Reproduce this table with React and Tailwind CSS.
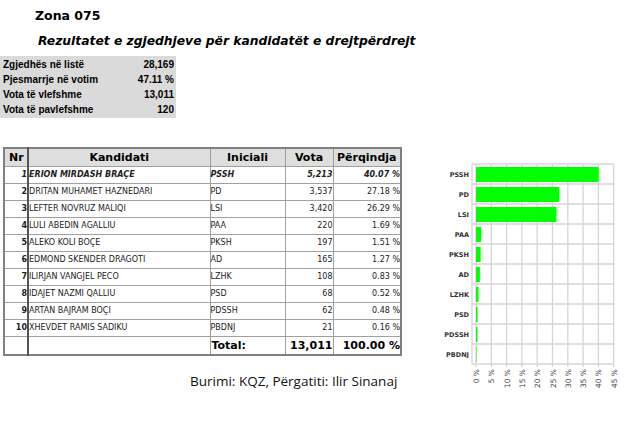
import React from "react";

const summary = [
  ["Zgjedhës në listë", "28,169"],
  ["Pjesmarrje në votim", "47.11 %"],
  ["Vota të vlefshme", "13,011"],
  ["Vota të pavlefshme", "120"],
];

const candidates = [
  ["ERION MIRDASH BRAÇE", "PSSH", "5,213", "40.07 %", 40.07],
  ["DRITAN MUHAMET HAZNEDARI", "PD", "3,537", "27.18 %", 27.18],
  ["LEFTER NOVRUZ MALIQI", "LSI", "3,420", "26.29 %", 26.29],
  ["LULI ABEDIN AGALLIU", "PAA", "220", "1.69 %", 1.69],
  ["ALEKO KOLI BOÇE", "PKSH", "197", "1.51 %", 1.51],
  ["EDMOND SKENDER DRAGOTI", "AD", "165", "1.27 %", 1.27],
  ["ILIRJAN VANGJEL PECO", "LZHK", "108", "0.83 %", 0.83],
  ["IDAJET NAZMI QALLIU", "PSD", "68", "0.52 %", 0.52],
  ["ARTAN BAJRAM BOÇI", "PDSSH", "62", "0.48 %", 0.48],
  ["XHEVDET RAMIS SADIKU", "PBDNJ", "21", "0.16 %", 0.16],
];

const verdana = { fontFamily: '"DejaVu Sans", Verdana, sans-serif' };

// chart geometry, in svg coords
const X0 = 54;
const PX = 3.06;
const TOP = 15;
const ROW = 20;

const Chart = () => (
  <svg width="200" height="250" className="block">
    {/* horizontal grid */}
    {Array.from({ length: 11 }).map((_, i) => (
      <line
        key={"h" + i}
        x1={X0 - 4}
        x2={X0 + 45 * PX}
        y1={TOP + i * ROW}
        y2={TOP + i * ROW}
        stroke="#d6d6d6"
        strokeWidth="1.3"
      />
    ))}
    {/* vertical grid */}
    {Array.from({ length: 10 }).map((_, i) => (
      <line
        key={"v" + i}
        x1={X0 + i * 5 * PX}
        x2={X0 + i * 5 * PX}
        y1={TOP}
        y2={TOP + 10 * ROW + 3}
        stroke="#d6d6d6"
        strokeWidth="1.3"
      />
    ))}
    <line x1={X0 - 4} x2={X0 - 4} y1={TOP} y2={TOP + 10 * ROW} stroke="#d6d6d6" strokeWidth="1.3" />
    {candidates.map((c, i) => (
      <g key={c[1]}>
        <rect
          x={X0}
          y={TOP + i * ROW + 3}
          width={c[4] * PX}
          height="15"
          fill="#00ff00"
        />
        <text
          x={X0 - 7}
          y={TOP + i * ROW + 13}
          textAnchor="end"
          fontSize="6.5"
          fontWeight="bold"
          fill="#333"
          style={verdana}
        >
          {c[1]}
        </text>
      </g>
    ))}
    {Array.from({ length: 10 }).map((_, i) => (
      <text
        key={"t" + i}
        transform={`translate(${X0 + i * 5 * PX + 3}, ${TOP + 10 * ROW + 5}) rotate(-90)`}
        textAnchor="end"
        fontSize="7.5"
        fill="#444"
        style={verdana}
      >
        {i * 5} %
      </text>
    ))}
  </svg>
);

const App = () => {
  const td = "border border-[#a0a0a0] p-0 leading-none";
  return (
    <div className="w-[628px] h-[425px] bg-white overflow-hidden text-black" style={verdana}>
      <div className="pl-[35px] pt-[8px] text-[12.5px] font-bold leading-[15px]">Zona 075</div>
      <div className="pl-[38px] pt-[10px] text-[12.3px] font-bold italic leading-[16px]">
        Rezultatet e zgjedhjeve për kandidatët e drejtpërdrejt
      </div>

      <div
        className="mt-[7px] w-[176px] bg-[#dadada] py-[1px] pl-[3px] pr-[2px]"
        style={{ fontFamily: '"Liberation Sans", Arial, sans-serif' }}
      >
        {summary.map(([k, v]) => (
          <div key={k} className="flex justify-between text-[10px] font-bold leading-[15px]">
            <span>{k}</span>
            <span>{v}</span>
          </div>
        ))}
      </div>

      <div className="flex mt-[29px]">
        <div className="pl-[3px]">
          <table className="border-collapse border-2 border-[#808080] w-[397px] table-fixed">
            <colgroup>
              <col className="w-[24px]" />
              <col className="w-[182px]" />
              <col className="w-[75px]" />
              <col className="w-[48px]" />
              <col className="w-[68px]" />
            </colgroup>
            <thead>
              <tr className="h-[18px] bg-[#dedede] text-[11px] font-bold">
                <th className={`${td} border-r-2 border-r-[#555] text-left pl-[4px]`}>Nr</th>
                <th className={`${td} text-center`}>Kandidati</th>
                <th className={`${td} text-center`}>Iniciali</th>
                <th className={`${td} text-center`}>Vota</th>
                <th className={`${td} text-center`}>Përqindja</th>
              </tr>
            </thead>
            <tbody className="text-[8px] text-[#222]">
              {candidates.map((c, i) => {
                const first = i === 0;
                const em = first ? "font-bold italic" : "";
                return (
                  <tr key={c[0]} className="h-[17px]">
                    <td className={`${td} border-r-2 border-r-[#555] text-right font-bold ${first ? "italic" : ""}`}>
                      {i + 1}
                    </td>
                    <td className={`${td} ${em} truncate`}>{c[0]}</td>
                    <td className={`${td} ${em}`}>{c[1]}</td>
                    <td className={`${td} text-right ${em}`}>{c[2]}</td>
                    <td className={`${td} text-right ${em}`}>{c[3]}</td>
                  </tr>
                );
              })}
              <tr className="h-[19px] text-[11px] font-bold text-black">
                <td className={`${td} border-r-2 border-r-[#555]`}></td>
                <td className={td}></td>
                <td className={`${td} pl-[1px]`}>Total:</td>
                <td className={`${td} text-right`}>13,011</td>
                <td className={`${td} text-right`}>100.00 %</td>
              </tr>
            </tbody>
          </table>
          <div
            className="pl-[187px] pt-[15px] text-[13.5px] text-[#111]"
            style={{ fontFamily: '"Open Sans", "Noto Sans", sans-serif' }}
          >
            Burimi: KQZ, Përgatiti: Ilir Sinanaj
          </div>
        </div>
        <div className="ml-[20px] mt-[2px]">
          <Chart />
        </div>
      </div>
    </div>
  );
};

export default App;
